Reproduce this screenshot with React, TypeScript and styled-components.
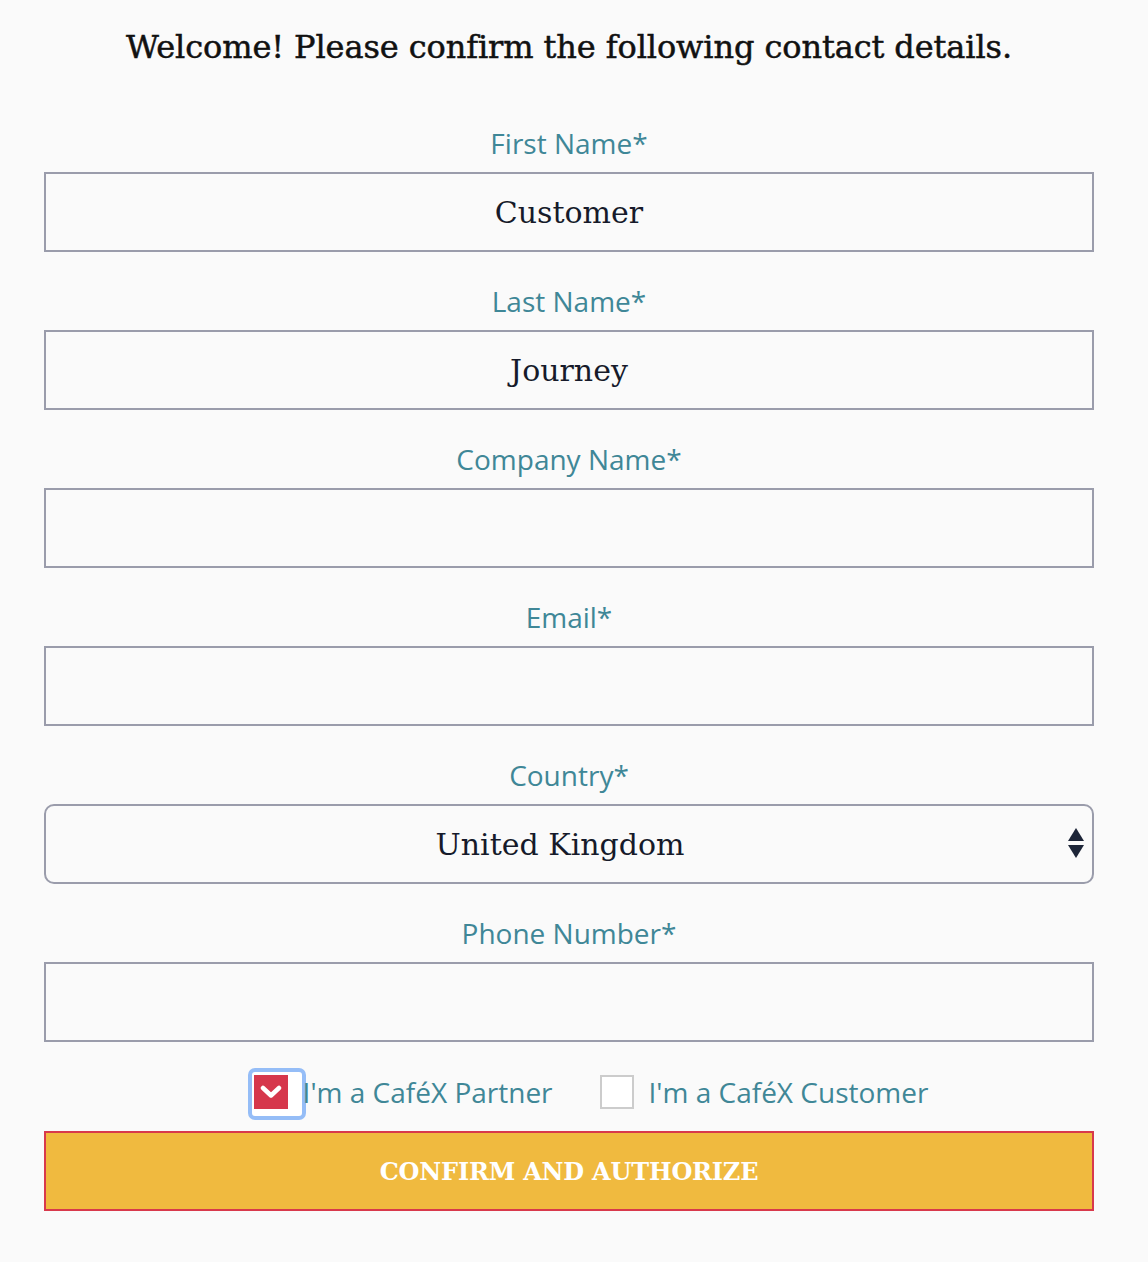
import styled, { createGlobalStyle } from "styled-components";

const GlobalStyle = createGlobalStyle`
  body {
    margin: 0;
    background: #fafafa;
    font-family: "Open Sans", sans-serif;
  }
`;

const Page = styled.div`
  width: 1148px;
  min-height: 1262px;
  background: #fafafa;
  padding: 0 54px 0 44px;
  box-sizing: border-box;
`;

const Title = styled.h1`
  margin: 0;
  padding-top: 24px;
  height: 124px;
  box-sizing: border-box;
  text-align: center;
  font-family: "DejaVu Serif", serif;
  font-weight: normal;
  font-size: 32px;
  line-height: 46px;
  color: #111;
  letter-spacing: -0.1px;
  -webkit-text-stroke: 0.5px #111;
`;

const Form = styled.form`
  display: flex;
  flex-direction: column;
`;

const Field = styled.div<{ $last?: boolean }>`
  display: flex;
  flex-direction: column;
  margin-bottom: ${(p) => (p.$last ? "0" : "30px")};
`;

const Label = styled.label`
  text-align: center;
  font-family: "Open Sans", sans-serif;
  font-size: 28px;
  line-height: 38px;
  color: #3f8797;
  margin-bottom: 10px;
`;

const boxStyles = `
  width: 100%;
  height: 80px;
  box-sizing: border-box;
  border: 2px solid #9a9cab;
  background: #fafafa;
  font-family: "DejaVu Serif", serif;
  font-size: 30px;
  color: #161a2a;
  text-align: center;
  outline: none;
`;

const Input = styled.input`
  ${boxStyles}
  border-radius: 0;
  padding: 0 16px;
`;

const SelectWrap = styled.div`
  position: relative;
`;

const Select = styled.select`
  ${boxStyles}
  border-radius: 10px;
  appearance: none;
  text-align-last: center;
  padding: 0 18px 0 0;
`;

const Arrows = styled.svg`
  position: absolute;
  right: 9px;
  top: 24px;
  pointer-events: none;
`;

const ChecksRow = styled.div`
  display: flex;
  justify-content: center;
  align-items: center;
  margin: 22px 0 11px;
  height: 56px;
  padding-left: 38px;
`;

const CheckLabel = styled.label`
  display: flex;
  align-items: center;
  font-family: "Open Sans", sans-serif;
  font-size: 28px;
  color: #3f8797;
  cursor: pointer;
  & + & {
    margin-left: 47px;
  }
`;

const FocusBox = styled.span`
  width: 58px;
  height: 52px;
  box-sizing: border-box;
  border: 4px solid #95bdf7;
  border-radius: 7px;
  background: #fff;
  padding: 3px 0 0 2px;
  margin-right: -3px;
  margin-top: 4px;
`;

const Tick = styled.span`
  width: 34px;
  height: 34px;
  display: flex;
  align-items: center;
  justify-content: center;
  background: #d6374c;
`;

const Box = styled.span`
  width: 34px;
  height: 34px;
  box-sizing: border-box;
  margin-right: 15px;
  background: #fff;
  border: 2px solid #cccccc;
`;

const Button = styled.button`
  width: 100%;
  height: 80px;
  box-sizing: border-box;
  background: #f0ba3f;
  border: 2px solid #d8394c;
  color: #fff;
  font-family: "DejaVu Serif", serif;
  font-weight: bold;
  font-size: 24px;
  letter-spacing: -0.2px;
  cursor: pointer;
`;

const fields = [
  { label: "First Name*", value: "Customer" },
  { label: "Last Name*", value: "Journey" },
  { label: "Company Name*", value: "" },
  { label: "Email*", value: "" },
];

export default function App() {
  return (
    <>
      <GlobalStyle />
      <Page>
        <Title>Welcome! Please confirm the following contact details.</Title>
        <Form onSubmit={(e) => e.preventDefault()}>
          {fields.map((f) => (
            <Field key={f.label}>
              <Label>{f.label}</Label>
              <Input defaultValue={f.value} />
            </Field>
          ))}
          <Field>
            <Label>Country*</Label>
            <SelectWrap>
              <Select defaultValue="United Kingdom">
                <option>United Kingdom</option>
                <option>United States</option>
              </Select>
              <Arrows width="18" height="32" viewBox="0 0 18 32">
                <path d="M9 0 L17 13 L1 13 Z" fill="#1d2538" />
                <path d="M1 17 L17 17 L9 30 Z" fill="#1d2538" />
              </Arrows>
            </SelectWrap>
          </Field>
          <Field $last>
            <Label>Phone Number*</Label>
            <Input />
          </Field>
          <ChecksRow>
            <CheckLabel>
              <FocusBox>
                <Tick>
                  <svg width="22" height="16" viewBox="0 0 22 16">
                    <path
                      d="M3 4 L11 11.5 L19 4"
                      fill="none"
                      stroke="#fff"
                      strokeWidth="4.5"
                      strokeLinecap="round"
                      strokeLinejoin="round"
                    />
                  </svg>
                </Tick>
              </FocusBox>
              I'm a CaféX Partner
            </CheckLabel>
            <CheckLabel>
              <Box />
              I'm a CaféX Customer
            </CheckLabel>
          </ChecksRow>
          <Button type="submit">CONFIRM AND AUTHORIZE</Button>
        </Form>
      </Page>
    </>
  );
}
